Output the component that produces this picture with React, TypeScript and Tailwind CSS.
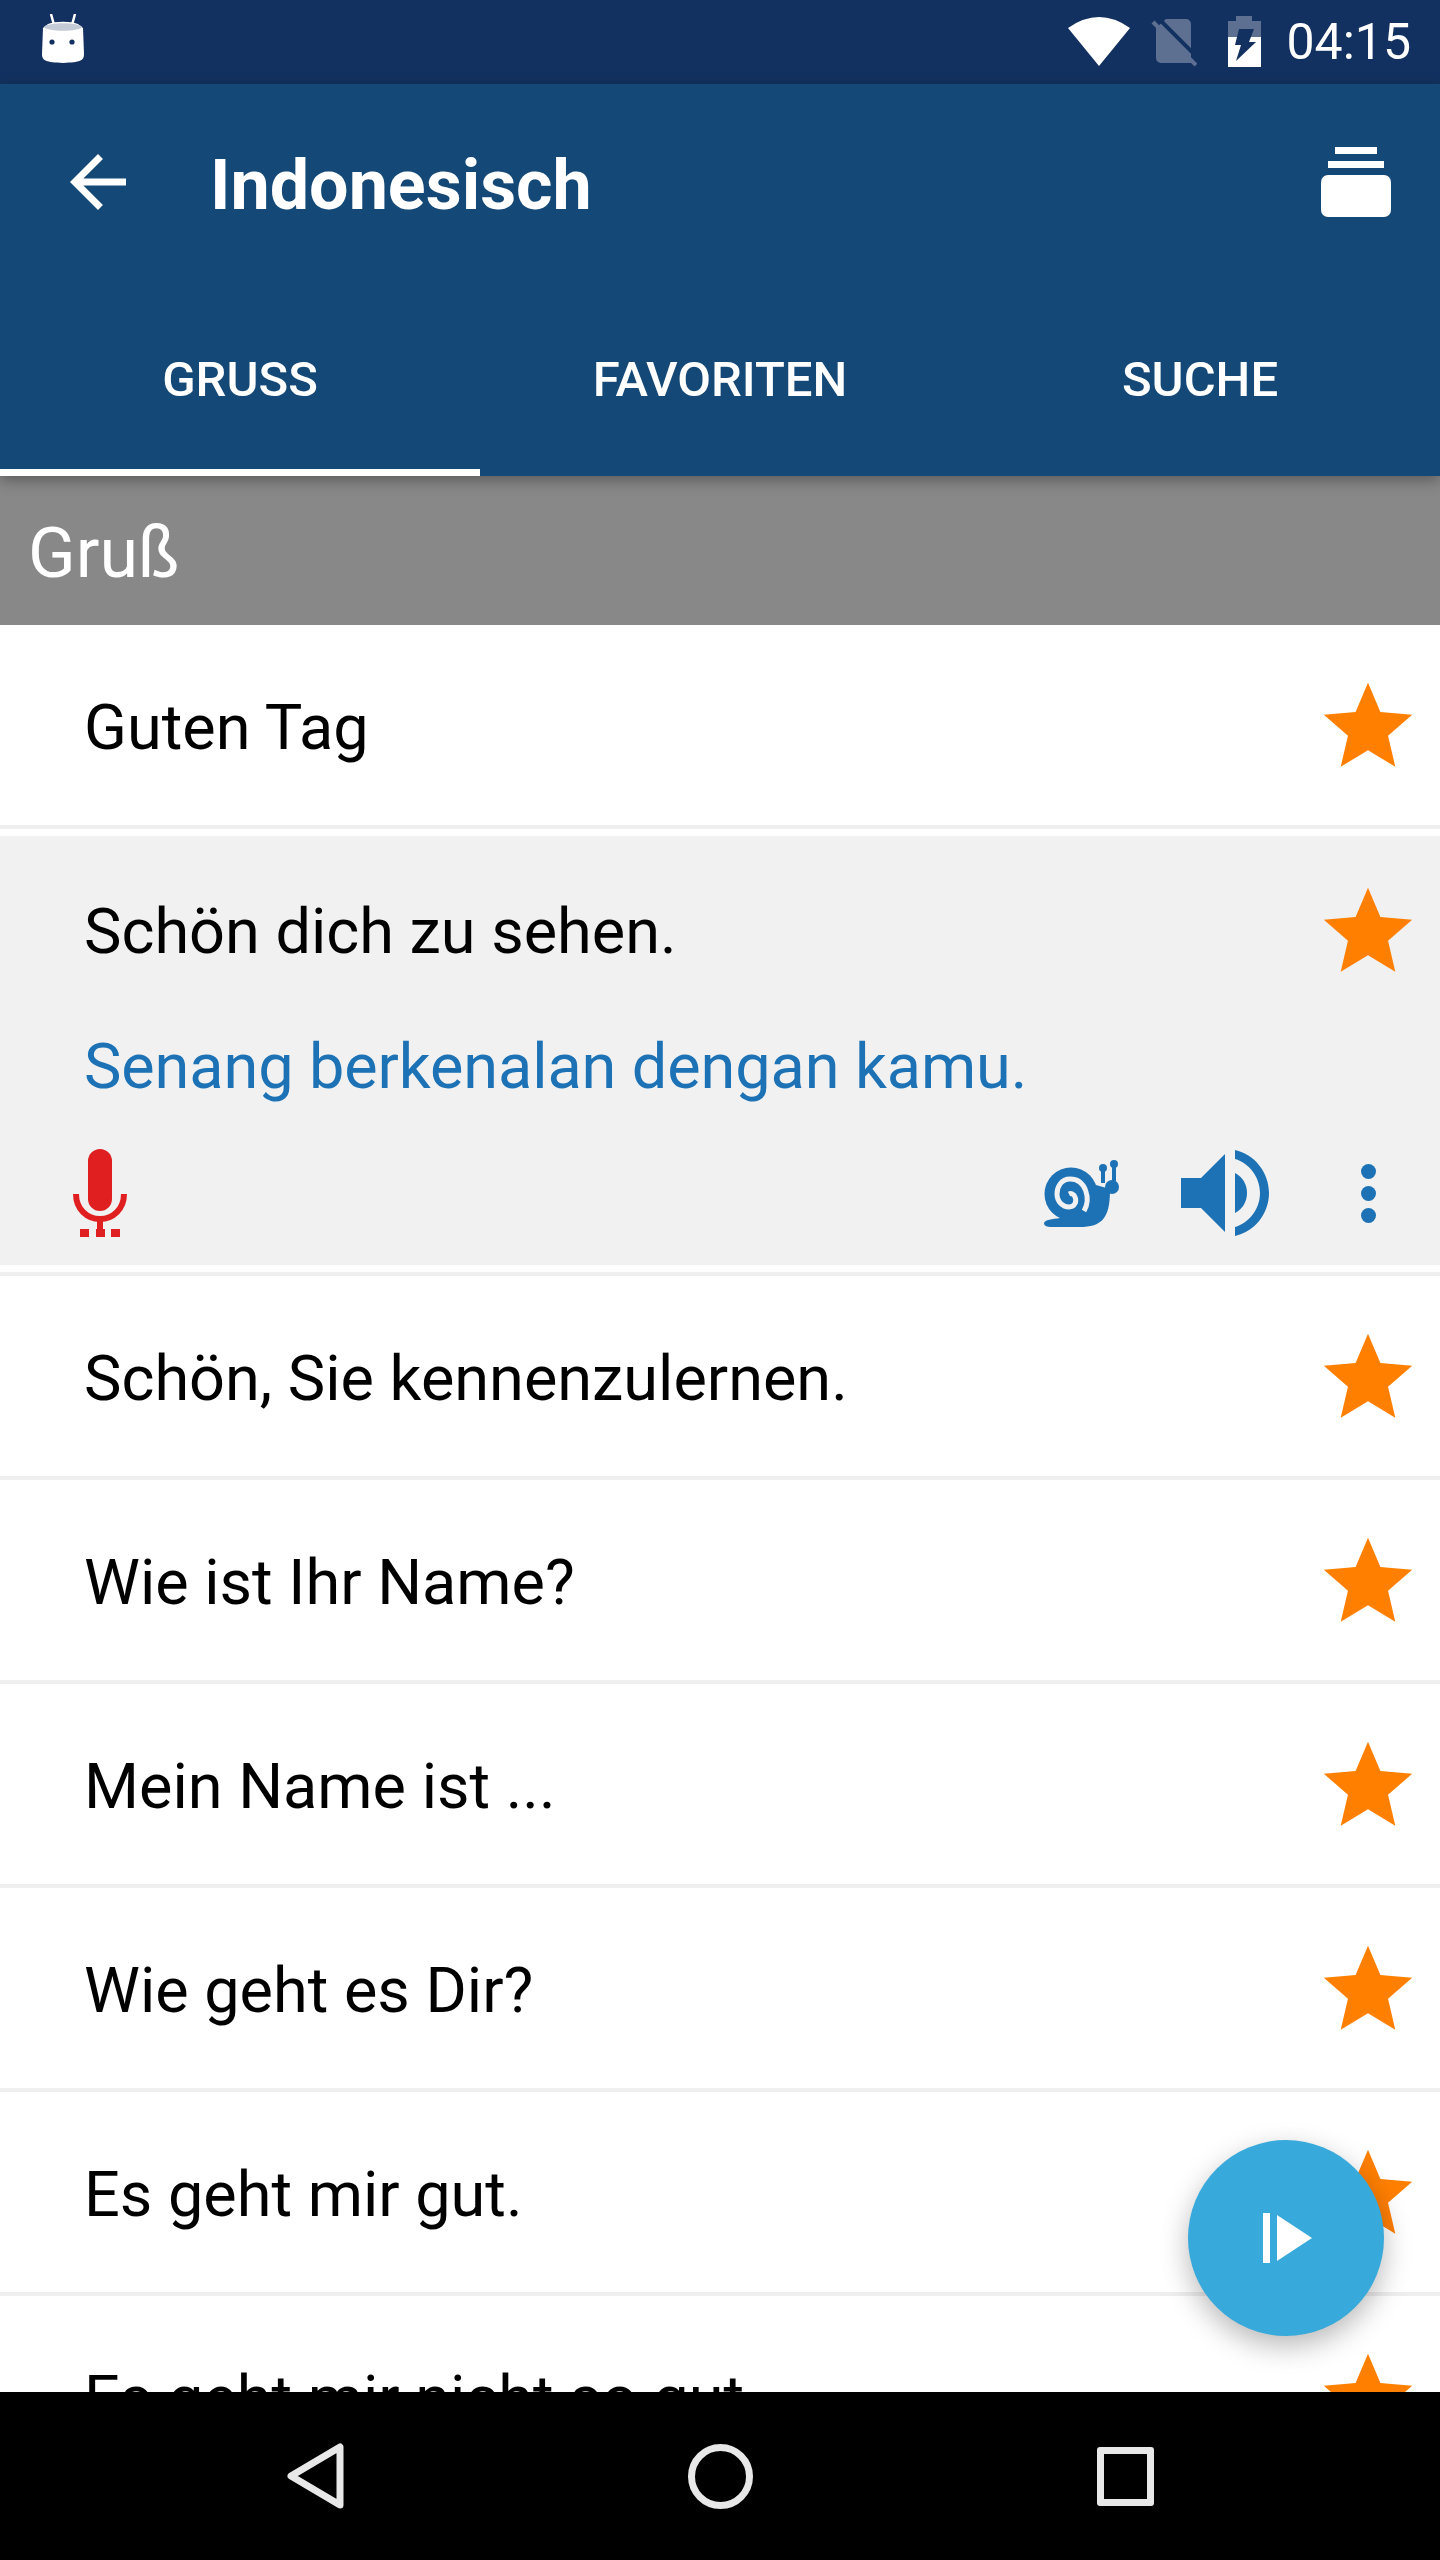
import React from "react";

const phrases = [
  "Schön, Sie kennenzulernen.",
  "Wie ist Ihr Name?",
  "Mein Name ist ...",
  "Wie geht es Dir?",
  "Es geht mir gut.",
  "Es geht mir nicht so gut.",
];

function Star() {
  return (
    <svg width="106" height="106" viewBox="0 0 24 24" fill="#ff7f00" className="shrink-0 mt-[3px]">
      <path d="M12 17.27L18.18 21l-1.64-7.03L22 9.24l-7.19-.61L12 2 9.19 8.63 2 9.24l5.46 4.73L5.82 21z" />
    </svg>
  );
}

function Row({ text }: { text: string }) {
  return (
    <div className="h-[204px] shrink-0 bg-white border-b-4 border-[#eeeeee] flex items-center justify-between pl-[84px] pr-[19px]">
      <p className="text-[63px] leading-[74px] text-black mt-[6px]">{text}</p>
      <Star />
    </div>
  );
}

function StatusIcons() {
  return (
    <div className="flex items-start pt-[16px] h-full">
      <svg width="62" height="50" viewBox="0 0 62 50" className="mt-[1px]">
        <path d="M0 11 Q31 -11 62 11 L31 49Z" fill="#fff" />
      </svg>
      <svg width="46" height="48" viewBox="0 0 46 48" className="ml-[21px] mt-[3px]">
        <path d="M15 0H35a5 5 0 0 1 5 5V44H10a5 5 0 0 1-5-5V9Z" fill="#5d7092" />
        <path d="M6 -2L50 42" stroke="#133160" strokeWidth="4" />
        <path d="M2 3L45 46" stroke="#5d7092" strokeWidth="4" />
      </svg>
      <svg width="33" height="51" viewBox="0 0 33 51" className="ml-[31px]">
        <path d="M8 0H24V5H33V21H0V5H8Z" fill="#5d7092" />
        <path d="M0 21H33V51H0Z" fill="#fff" />
        <path d="M11 13H26L21 26H28L8 45L13 29H7Z" fill="#133160" />
      </svg>
    </div>
  );
}

export default function App() {
  return (
    <div className="relative w-[1440px] h-[2560px] overflow-hidden flex flex-col bg-white font-['Roboto',sans-serif]">
      <div className="h-[84px] shrink-0 bg-[#133160] flex items-center justify-between pl-[42px] pr-[29px]">
        <svg width="42" height="50" viewBox="0 0 42 50" className="mb-[6px]">
          <path d="M9 0L12 11M33 0L30 11" stroke="#fff" strokeWidth="2.5" />
          <path d="M6 10C14 7 28 7 36 10L41 14L42 40C42 47 38 48 21 49C4 48 0 47 0 40L1 14Z" fill="#fff" />
          <path d="M2 13C5 8 37 8 40 13C37 18 5 18 2 13Z" fill="#c4cbd6" />
          <circle cx="10" cy="28" r="2.6" fill="#133160" />
          <circle cx="30" cy="28" r="2.6" fill="#133160" />
        </svg>
        <div className="flex items-center h-full gap-[25px]">
          <StatusIcons />
          <span className="text-[50px] leading-[84px] text-white">04:15</span>
        </div>
      </div>

      <div className="relative z-10 shrink-0 bg-[#144977] shadow-[0_4px_14px_rgba(0,0,0,0.35)]">
        <div className="h-[224px] flex items-center pl-[56px] pr-[49px]">
          <svg width="84" height="84" viewBox="0 0 24 24" fill="#fff" className="shrink-0 mb-[28px]">
            <path d="M20 11H7.83l5.59-5.59L12 4l-8 8 8 8 1.41-1.41L7.83 13H20v-2z" />
          </svg>
          <h1 className="ml-[70px] text-[70px] leading-[84px] font-bold text-white flex-1 mb-[22px]">Indonesisch</h1>
          <svg width="70" height="70" viewBox="0 0 70 70" fill="#fff" className="shrink-0 mb-[28px]">
            <rect x="14" y="0" width="42" height="7" />
            <rect x="7" y="14" width="56" height="7" />
            <rect x="0" y="28" width="70" height="42" rx="7" />
          </svg>
        </div>
        <div className="h-[168px] flex text-[49px] font-medium text-white">
          <div className="w-[480px] flex items-center justify-center border-b-[7px] border-white pb-[17px]">GRUSS</div>
          <div className="w-[480px] flex items-center justify-center pb-[24px]">FAVORITEN</div>
          <div className="w-[480px] flex items-center justify-center pb-[24px]">SUCHE</div>
        </div>
      </div>

      <div className="h-[149px] shrink-0 bg-[#888888] flex items-center pl-[28px]">
        <p className="text-[70px] leading-[84px] text-white mt-[5px]">Gruß</p>
      </div>

      <div className="flex-1 min-h-0 overflow-hidden flex flex-col">
        <Row text="Guten Tag" />

        <div className="h-[447px] shrink-0 bg-white border-b-4 border-[#eeeeee] py-[7px]">
          <div className="h-full bg-[#f1f1f1] flex flex-col">
            <div className="h-[188px] shrink-0 flex items-center justify-between pl-[84px] pr-[19px]">
              <p className="text-[63px] leading-[74px] text-black mt-[3px]">Schön dich zu sehen.</p>
              <Star />
            </div>
            <p className="pl-[84px] text-[63px] leading-[74px] text-[#1c72b5] mt-[6px] tracking-[-0.1px]">Senang berkenalan dengan kamu.</p>
            <div className="flex items-center pl-[73px] pr-[64px] mt-[45px] h-[88px]">
              <svg width="54" height="88" viewBox="0 0 54 88" className="shrink-0">
                <rect x="15" y="0" width="24" height="62" rx="12" fill="#e02020" />
                <path d="M3 45C3 60 14 70 27 70C40 70 51 60 51 45" fill="none" stroke="#e02020" strokeWidth="6" />
                <rect x="24" y="68" width="6" height="12" fill="#e02020" />
                <rect x="7" y="80" width="9" height="8" fill="#e02020" />
                <rect x="23" y="80" width="9" height="8" fill="#e02020" />
                <rect x="38" y="80" width="9" height="8" fill="#e02020" />
              </svg>
              <svg width="90" height="85" viewBox="0 0 90 85" className="shrink-0 ml-auto">
                <path d="M8 72C9 69 16 68 24 67L50 40L60 34L74 38C74 50 73 60 68 67C63 74 54 76 44 76H16C11 76 8 75 8 72Z" fill="#1c72b5" />
                <circle cx="35" cy="43" r="26.5" fill="#1c72b5" />
                <path d="M48 60C55 48 50 28 34 28C25 28 21 36 21 43C21 51 27 56 33 56C39 56 41 50 39 46C38 43 35 42 33 43" fill="none" stroke="#f1f1f1" strokeWidth="5" />
                <circle cx="76" cy="36" r="7" fill="#1c72b5" />
                <path d="M67 17V32M78 13V30" stroke="#1c72b5" strokeWidth="4" />
                <circle cx="67" cy="17" r="4" fill="#1c72b5" />
                <circle cx="78" cy="13" r="4" fill="#1c72b5" />
              </svg>
              <svg width="88" height="86" viewBox="0 0 88 86" fill="#1c72b5" className="shrink-0 ml-[55px]">
                <path d="M0 28H20L44 4V82L20 58H0Z" />
                <path d="M54 23C62 27 66 35 66 43C66 51 62 59 54 63Z" />
                <path d="M54 0C73 4 88 22 88 43C88 64 73 82 54 86V77C68 73 79 59 79 43C79 27 68 13 54 9Z" />
              </svg>
              <div className="shrink-0 ml-[92px] flex flex-col gap-[7px]">
                <div className="w-[15px] h-[15px] rounded-full bg-[#1c72b5]" />
                <div className="w-[15px] h-[15px] rounded-full bg-[#1c72b5]" />
                <div className="w-[15px] h-[15px] rounded-full bg-[#1c72b5]" />
              </div>
            </div>
          </div>
        </div>

        {phrases.map((p) => (
          <Row key={p} text={p} />
        ))}
      </div>

      <div className="h-[168px] shrink-0 bg-black relative z-10 flex items-center">
        <svg width="58" height="66" viewBox="0 0 58 66" className="ml-[287px] mb-[1px]" fill="none" stroke="#e8e8e8" strokeWidth="7" strokeLinejoin="round">
          <path d="M53 4V62L4 33Z" />
        </svg>
        <div className="w-[65px] h-[65px] rounded-full border-[7px] border-[#e8e8e8] ml-[343px]" />
        <div className="w-[57px] h-[59px] rounded-[3px] border-[7px] border-[#e8e8e8] ml-[344px]" />
      </div>

      <button className="absolute left-[1188px] top-[2140px] w-[196px] h-[196px] rounded-full bg-[#38a9db] shadow-[0_10px_28px_rgba(0,0,0,0.28)] flex items-center justify-center z-20">
        <svg width="49" height="50" viewBox="0 0 49 50" fill="#fff" className="ml-[3px]">
          <rect x="0" y="0" width="7" height="50" />
          <path d="M14 2L49 25L14 48Z" />
        </svg>
      </button>
    </div>
  );
}
